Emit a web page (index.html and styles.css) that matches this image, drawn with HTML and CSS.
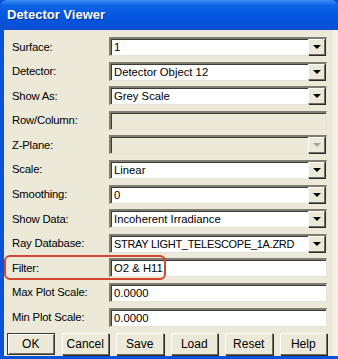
FILE: index.html
```html
<!DOCTYPE html>
<html>
<head lang="en">
    <meta charset="UTF-8">
    <title>Detector Viewer</title>
    <link rel="stylesheet" href="styles.css">
</head>
<body>
    <div id="window">
        <div id="titlebar">Detector Viewer</div>
        <div id="client">
            <div class="row">
                <span class="label">Surface:</span>
                <div class="field"><span class="value">1</span><span class="drop"><i></i></span></div>
            </div>
            <div class="row">
                <span class="label">Detector:</span>
                <div class="field"><span class="value">Detector Object 12</span><span class="drop"><i></i></span></div>
            </div>
            <div class="row">
                <span class="label">Show As:</span>
                <div class="field"><span class="value">Grey Scale</span><span class="drop"><i></i></span></div>
            </div>
            <div class="row">
                <span class="label">Row/Column:</span>
                <div class="field disabled"><span class="value"></span></div>
            </div>
            <div class="row">
                <span class="label">Z-Plane:</span>
                <div class="field disabled"><span class="value"></span><span class="drop off"><i></i></span></div>
            </div>
            <div class="row">
                <span class="label">Scale:</span>
                <div class="field"><span class="value">Linear</span><span class="drop"><i></i></span></div>
            </div>
            <div class="row">
                <span class="label">Smoothing:</span>
                <div class="field"><span class="value">0</span><span class="drop"><i></i></span></div>
            </div>
            <div class="row">
                <span class="label">Show Data:</span>
                <div class="field"><span class="value">Incoherent Irradiance</span><span class="drop"><i></i></span></div>
            </div>
            <div class="row">
                <span class="label">Ray Database:</span>
                <div class="field"><span class="value narrow">STRAY LIGHT_TELESCOPE_1A.ZRD</span><span class="drop"><i></i></span></div>
            </div>
            <div class="row">
                <span class="label">Filter:</span>
                <div class="field"><span class="value">O2 &amp; H11</span></div>
                <div id="mark"></div>
            </div>
            <div class="row">
                <span class="label">Max Plot Scale:</span>
                <div class="field"><span class="value">0.0000</span></div>
            </div>
            <div class="row">
                <span class="label">Min Plot Scale:</span>
                <div class="field"><span class="value">0.0000</span></div>
            </div>

            <div id="buttons">
                <span class="btn default">OK</span>
                <span class="btn">Cancel</span>
                <span class="btn">Save</span>
                <span class="btn">Load</span>
                <span class="btn">Reset</span>
                <span class="btn">Help</span>
            </div>
        </div>
    </div>
</body>
</html>
```

FILE: styles.css
```css
*
{
    margin: 0;
    padding: 0;
    box-sizing: border-box;
}

body
{
    width: 338px;
    height: 359px;
    overflow: hidden;
    background: #0b4fd6;
    font-family: "Liberation Sans", Arial, sans-serif;
    font-size: 11.3px;
    color: #000;
}

#window
{
    height: 359px;
    display: flex;
    flex-direction: column;
    background: #0a52d8;
    border-radius: 7px 7px 0 0;
    overflow: hidden;
}
#titlebar
{
    height: 30px;
    flex: none;
    padding: 7px 0 0 7px;
    font-size: 13px;
    font-weight: bold;
    color: #fff;
    text-shadow: 1px 1px 0 #0a2e8c;
    background: linear-gradient(to bottom, #3d8ff3 0%, #0f63e6 18%, #0356e0 55%, #0a50d4 100%);
}
#client
{
    flex: 1;
    margin: 0 0 3px 4px;
    padding: 7px 0 0 0;
    background: #ece9d8;
    border-right: 5px solid #f4f2e8;
    display: flex;
    flex-direction: column;
    gap: 5.6px;
}

.row
{
    height: 19px;
    display: flex;
    align-items: center;
    position: relative;
}
.label
{
    width: 105px;
    padding-left: 8px;
    flex: none;
    letter-spacing: -0.2px;
}
.field
{
    width: 218px;
    height: 19px;
    flex: none;
    display: flex;
    align-items: center;
    background: #fff;
    border-top: 2px solid #7f7d72;
    border-left: 2px solid #7f7d72;
    border-bottom: 1px solid #e6e3d6;
    border-right: 1px solid #e6e3d6;
    box-shadow: inset 1px 1px 0 #3c3b36;
}
.field.disabled
{
    background: #ece9d8;
}
.value
{
    flex: 1;
    padding-left: 3px;
    white-space: nowrap;
    overflow: hidden;
}
.value.narrow
{
    font-size: 11px;
    letter-spacing: -0.3px;
}
.drop
{
    width: 17px;
    height: 16px;
    flex: none;
    display: flex;
    align-items: center;
    justify-content: center;
    background: #ece9d8;
    border-top: 1px solid #fff;
    border-left: 1px solid #fff;
    border-right: 1px solid #6f6d66;
    border-bottom: 1px solid #6f6d66;
    box-shadow: 1px 1px 0 #2c2b28;
    margin-right: 1px;
}
.drop i
{
    width: 0;
    height: 0;
    border-left: 4px solid transparent;
    border-right: 4px solid transparent;
    border-top: 4px solid #000;
}
.drop.off i
{
    border-top-color: #a8a69c;
}

#mark
{
    position: absolute;
    left: 0;
    top: -3px;
    width: 162px;
    height: 25px;
    border: 2px solid #d2462e;
    border-radius: 6px;
}

#buttons
{
    margin-top: 1px;
    padding: 0 6px 0 3px;
    display: flex;
    gap: 7px;
}
.btn
{
    flex: 1;
    height: 22px;
    display: flex;
    align-items: center;
    justify-content: center;
    font-size: 12px;
    background: #ece9d8;
    border-top: 1px solid #fff;
    border-left: 1px solid #fff;
    border-right: 1px solid #716f64;
    border-bottom: 1px solid #716f64;
    box-shadow: 1px 1px 0 #2a2925;
}
.btn.default
{
    border-color: #3a3934;
    box-shadow: inset 1px 1px 0 #fff, inset -1px -1px 0 #716f64;
}
```
